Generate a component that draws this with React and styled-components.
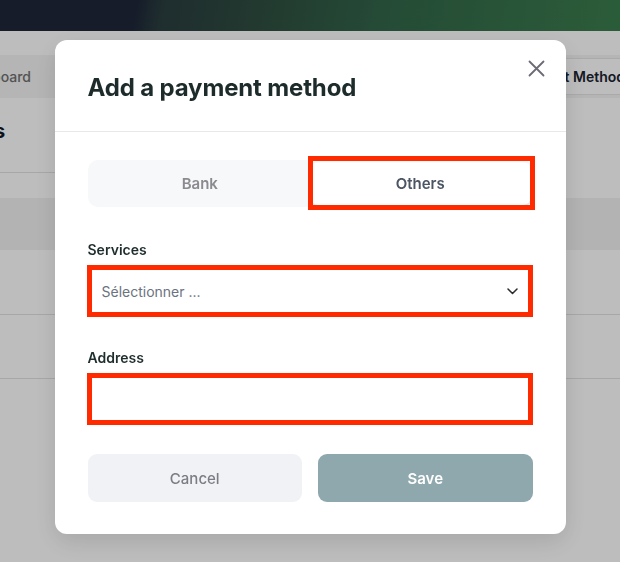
import React from "react";
import styled, { createGlobalStyle } from "styled-components";

const Global = createGlobalStyle`
  html, body { margin: 0; padding: 0; }
  body {
    font-family: Inter, "Noto Sans", "Liberation Sans", sans-serif;
    background: #ffffff;
    overflow: hidden;
  }
  * { box-sizing: border-box; }
`;

const Page = styled.div`
  width: 620px;
  height: 562px;
  overflow: hidden;
  background: #ffffff;
`;

const Banner = styled.div`
  height: 31px;
  background: linear-gradient(100deg, #1e2739 0%, #1e2739 22%, #2a3d3f 26%, #2f4e41 42%, #32664a 62%, #3b7d4d 100%);
`;

const SubNav = styled.div`
  margin-top: 24px;
  height: 43px;
  background: #f4f4f4;
  display: flex;
  align-items: center;
`;

const NavLink = styled.span`
  flex-shrink: 0;
  margin-left: -42px;
  font-size: 14px;
  font-weight: 500;
  color: #707070;
  white-space: nowrap;
`;

const NavButton = styled.span`
  flex-shrink: 0;
  margin-left: auto;
  margin-right: -20px;
  height: 37px;
  padding: 0 14px;
  display: flex;
  align-items: center;
  background: #ffffff;
  border: 1px solid #e6e6e6;
  border-radius: 6px;
  font-size: 14px;
  font-weight: 600;
  color: #1b2230;
  white-space: nowrap;
`;

const SectionHead = styled.div`
  height: 75px;
  display: flex;
  align-items: center;
  padding-bottom: 8px;
  border-bottom: 1px solid #e2e2e2;
  width: 120px;
`;

const SectionTitle = styled.h2`
  margin: 0 0 0 -172px;
  font-size: 20px;
  font-weight: 700;
  color: #111827;
  white-space: nowrap;
`;

const Table = styled.div`
  margin-top: 25px;
`;

const TableHead = styled.div`
  height: 52px;
  background: #f2f2f2;
`;

const TableRow = styled.div`
  height: ${(p) => p.$h}px;
  border-bottom: 1px solid #e2e2e2;
`;

const Overlay = styled.div`
  position: fixed;
  inset: 0;
  background: rgba(0, 0, 0, 0.26);
  display: flex;
  justify-content: center;
  align-items: flex-start;
  padding-top: 40px;
`;

const Modal = styled.div`
  position: relative;
  width: 511px;
  background: #ffffff;
  border-radius: 12px;
  box-shadow: 0 8px 24px rgba(0, 0, 0, 0.12);
`;

const Header = styled.div`
  height: 92px;
  padding: 0 33px;
  display: flex;
  align-items: center;
  border-bottom: 1px solid #e8e8ea;
`;

const Title = styled.h1`
  margin: 4px 0 0;
  font-size: 24px;
  font-weight: 700;
  letter-spacing: -0.15px;
  color: #1e2b2b;
`;

const CloseButton = styled.button`
  position: absolute;
  top: 19px;
  right: 20px;
  width: 19px;
  height: 19px;
  padding: 0;
  border: none;
  background: none;
  display: flex;
  align-items: center;
  justify-content: center;
  color: #6b6b73;
`;

const Body = styled.div`
  padding: 28px 33px 32px;
`;

const Tabs = styled.div`
  display: grid;
  grid-template-columns: 1fr 1fr;
  height: 47px;
  padding: 2px;
  background: #f7f8fa;
  border-radius: 10px;
`;

const Highlight = styled.span`
  position: absolute;
  inset: ${(p) => p.$inset};
  border: 5px solid #ff2a00;
  pointer-events: none;
`;

const Tab = styled.div`
  position: relative;
  display: flex;
  align-items: center;
  justify-content: center;
  border-radius: 8px;
  font-size: 15px;
  font-weight: 600;
  color: ${(p) => (p.$active ? "#4b5563" : "#8a8a8f")};
  background: ${(p) => (p.$active ? "#ffffff" : "transparent")};
  box-shadow: ${(p) => (p.$active ? "0 1px 2px rgba(0,0,0,0.12)" : "none")};
`;

const Field = styled.div`
  margin-top: ${(p) => p.$mt}px;
  display: flex;
  flex-direction: column;
  gap: 6px;
`;

const Label = styled.label`
  font-size: 14px;
  line-height: 20px;
  font-weight: 600;
  color: #1f2d2d;
`;

const InputBox = styled.div`
  position: relative;
  height: 50px;
  padding: 0 14px 0 13px;
  display: flex;
  align-items: center;
  justify-content: space-between;
  background: #ffffff;
  border: 1px solid #e5e7eb;
  border-radius: 6px;
  font-size: 14px;
  color: #6b7280;
`;

const Actions = styled.div`
  margin-top: 30px;
  display: grid;
  grid-template-columns: 1fr 1fr;
  gap: 16px;
`;

const Button = styled.button`
  height: 48px;
  border: none;
  border-radius: 9px;
  font-family: inherit;
  font-size: 15px;
  font-weight: ${(p) => (p.$primary ? 600 : 500)};
  color: ${(p) => (p.$primary ? "#ffffff" : "#7c7c84")};
  background: ${(p) => (p.$primary ? "#8fa8ad" : "#f1f2f6")};
`;

export default function App() {
  return (
    <>
      <Global />
      <Page>
        <Banner />
        <SubNav>
          <NavLink>Dashboard</NavLink>
          <NavButton>Payment Method</NavButton>
        </SubNav>
        <SectionHead>
          <SectionTitle>Payment Methods</SectionTitle>
        </SectionHead>
        <Table>
          <TableHead />
          <TableRow $h={65} />
          <TableRow $h={64} />
        </Table>
      </Page>
      <Overlay>
        <Modal>
          <Header>
            <Title>Add a payment method</Title>
          </Header>
          <CloseButton aria-label="Close">
            <svg width="17" height="17" viewBox="0 0 17 17" fill="none" stroke="currentColor" strokeWidth="1.8" strokeLinecap="round">
              <path d="M1.5 1.5 L15.5 15.5 M15.5 1.5 L1.5 15.5" />
            </svg>
          </CloseButton>
          <Body>
            <Tabs>
              <Tab>Bank</Tab>
              <Tab $active>
                Others
                <Highlight $inset="-6px -4px -5px -2px" />
              </Tab>
            </Tabs>
            <Field $mt={33}>
              <Label>Services</Label>
              <InputBox>
                <span>Sélectionner ...</span>
                <svg width="11" height="7" viewBox="0 0 11 7" fill="none" stroke="#2b2b2b" strokeWidth="1.5" strokeLinecap="round" strokeLinejoin="round">
                  <path d="M1 1 L5.5 5.5 L10 1" />
                </svg>
                <Highlight $inset="-2px -1px -2px -2px" />
              </InputBox>
            </Field>
            <Field $mt={32}>
              <Label>Address</Label>
              <InputBox>
                <Highlight $inset="-2px -1px -2px -2px" />
              </InputBox>
            </Field>
            <Actions>
              <Button>Cancel</Button>
              <Button $primary>Save</Button>
            </Actions>
          </Body>
        </Modal>
      </Overlay>
    </>
  );
}
